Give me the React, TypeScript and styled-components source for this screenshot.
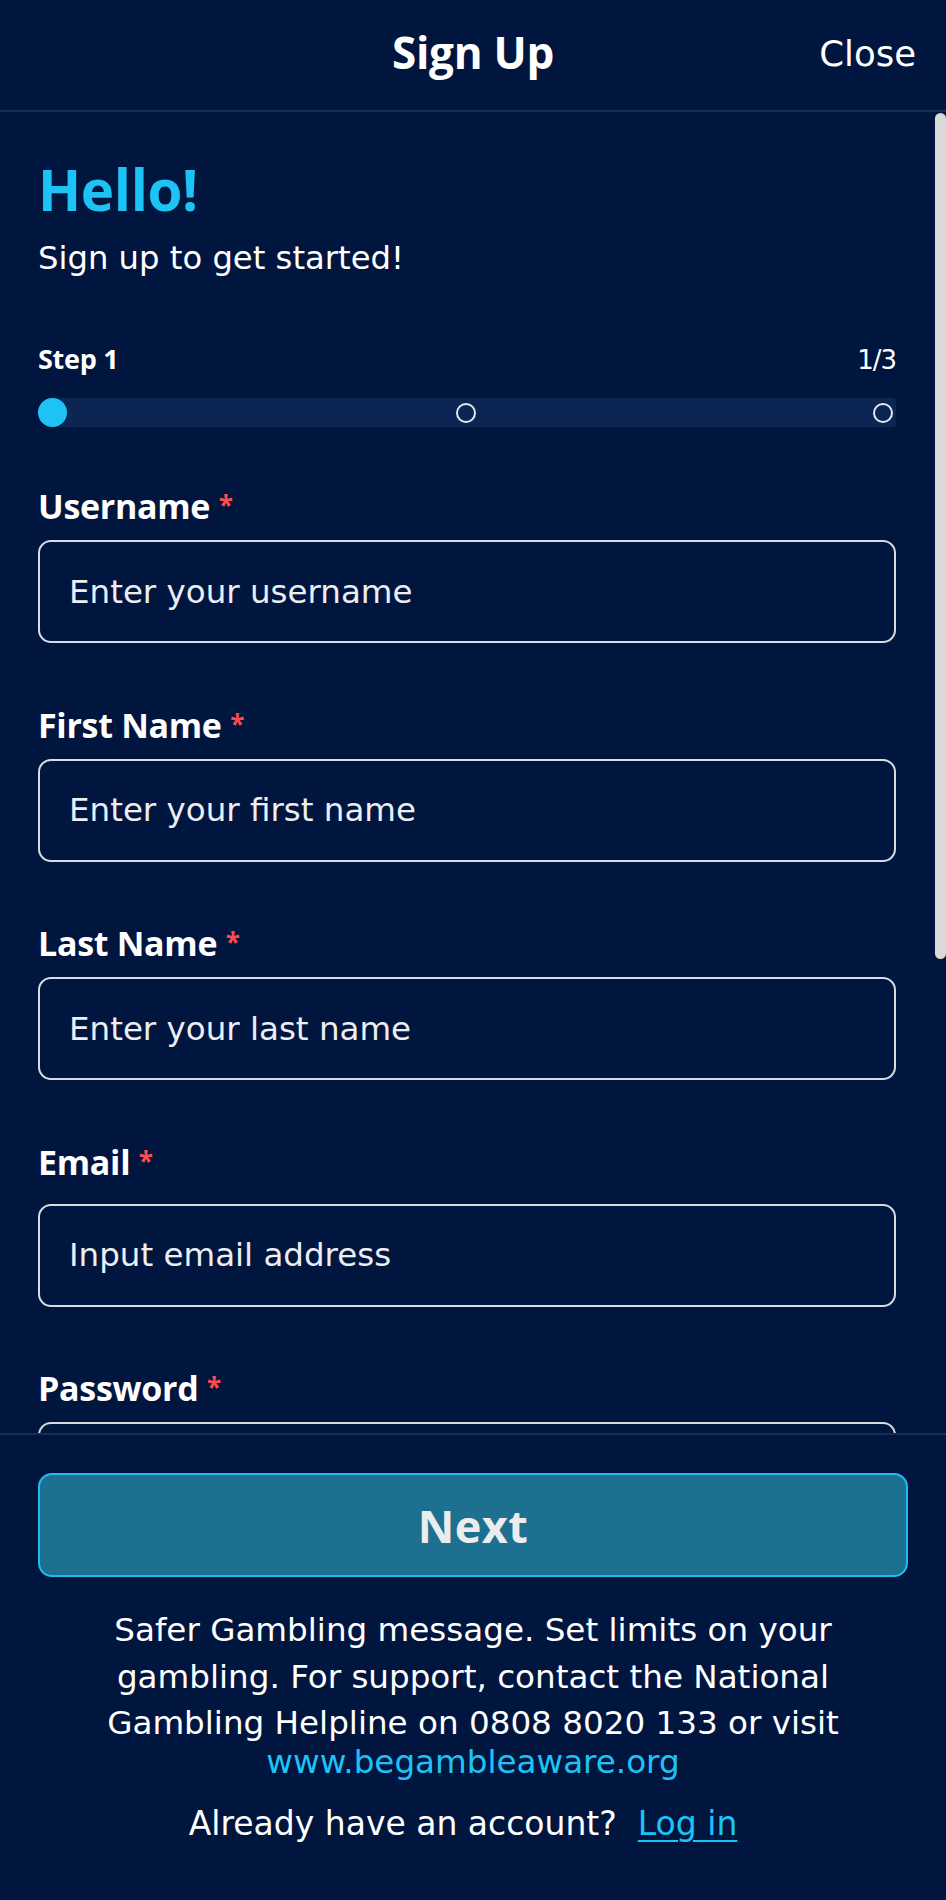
import React from "react";
import styled, { createGlobalStyle } from "styled-components";

const GlobalStyle = createGlobalStyle`
  html, body {
    margin: 0;
    padding: 0;
    background: #01163f;
  }
  * {
    box-sizing: border-box;
  }
`;

const fields = [
  { label: "Username", placeholder: "Enter your username" },
  { label: "First Name", placeholder: "Enter your first name" },
  { label: "Last Name", placeholder: "Enter your last name" },
  { label: "Email", placeholder: "Input email address", spaced: true },
  { label: "Password", placeholder: "" },
];

const App: React.FC = () => {
  return (
    <>
      <GlobalStyle />
      <Page>
        <Header>
          <HeaderSide />
          <Title>Sign Up</Title>
          <HeaderSide>
            <CloseButton>Close</CloseButton>
          </HeaderSide>
        </Header>

        <ScrollArea>
          <Content>
            <Hello>Hello!</Hello>
            <Subtitle>Sign up to get started!</Subtitle>

            <StepRow>
              <StepLabel>Step 1</StepLabel>
              <StepCount>1/3</StepCount>
            </StepRow>
            <Progress>
              <ActiveDot />
              <Dot />
              <Dot $end />
            </Progress>

            {fields.map((field) => (
              <Field key={field.label}>
                <Label $spaced={field.spaced}>
                  {field.label} <Required>*</Required>
                </Label>
                <Input type="text" placeholder={field.placeholder} />
              </Field>
            ))}
          </Content>
          <ScrollTrack>
            <ScrollThumb />
          </ScrollTrack>
        </ScrollArea>

        <Footer>
          <NextButton>Next</NextButton>
          <SaferText>
            Safer Gambling message. Set limits on your
            <br />
            gambling. For support, contact the National
            <br />
            Gambling Helpline on 0808 8020 133 or visit
          </SaferText>
          <SaferLink href="#">www.begambleaware.org</SaferLink>
          <LoginRow>
            Already have an account?&nbsp;&nbsp;<LoginLink href="#">Log in</LoginLink>
          </LoginRow>
        </Footer>
      </Page>
    </>
  );
};

const Page = styled.div`
  width: 946px;
  height: 1900px;
  background: #01163f;
  color: #ffffff;
  display: flex;
  flex-direction: column;
  overflow: hidden;
`;

const Header = styled.header`
  height: 112px;
  flex-shrink: 0;
  display: grid;
  grid-template-columns: 1fr auto 1fr;
  align-items: center;
  padding: 0 30px 6px 30px;
  border-bottom: 2px solid #172b55;
`;

const HeaderSide = styled.div`
  display: flex;
  justify-content: flex-end;
`;

const Title = styled.h1`
  margin: 0;
  font-family: "Open Sans", sans-serif;
  font-weight: 700;
  font-size: 44px;
  line-height: 1.2;
  letter-spacing: -0.3px;
`;

const CloseButton = styled.button`
  background: none;
  border: none;
  padding: 0;
  margin-top: 5px;
  color: #ffffff;
  font-family: "DejaVu Sans", sans-serif;
  font-size: 35.5px;
  line-height: 1.2;
  cursor: pointer;
`;

const ScrollArea = styled.div`
  height: 1321px;
  flex-shrink: 0;
  display: flex;
  overflow: hidden;
`;

const Content = styled.div`
  flex: 1;
  padding: 45px 37px 0 38px;
  display: flex;
  flex-direction: column;
`;

const ScrollTrack = styled.div`
  width: 13px;
  flex-shrink: 0;
  padding: 1px 0 0 2px;
`;

const ScrollThumb = styled.div`
  width: 11px;
  height: 846px;
  border-radius: 6px;
  background: #d9d9d9;
`;

const Hello = styled.h2`
  margin: 0;
  font-family: "Open Sans", sans-serif;
  font-weight: 700;
  font-size: 56.5px;
  line-height: 66px;
  color: #1ec3f5;
  letter-spacing: -0.4px;
`;

const Subtitle = styled.p`
  margin: 12px 0 0 0;
  font-family: "DejaVu Sans", sans-serif;
  font-size: 32.25px;
  line-height: 46px;
`;

const StepRow = styled.div`
  margin-top: 58px;
  display: flex;
  justify-content: space-between;
  align-items: baseline;
  line-height: 40px;
`;

const StepLabel = styled.span`
  font-family: "Open Sans", sans-serif;
  font-weight: 700;
  font-size: 27px;
  letter-spacing: -0.3px;
`;

const StepCount = styled.span`
  font-family: "DejaVu Sans", sans-serif;
  font-size: 26px;
  letter-spacing: -1px;
`;

const Progress = styled.div`
  margin-top: 18px;
  height: 29px;
  padding-right: 3px;
  background: #0d2552;
  border-radius: 15px 4px 4px 15px;
  display: grid;
  grid-template-columns: 1fr auto 1fr;
  align-items: center;
`;

const ActiveDot = styled.span`
  width: 29px;
  height: 29px;
  border-radius: 50%;
  background: #1ec3f5;
`;

const Dot = styled.span<{ $end?: boolean }>`
  width: 20px;
  height: 20px;
  border-radius: 50%;
  border: 2.5px solid #e6e9f0;
  justify-self: ${({ $end }) => ($end ? "end" : "center")};
`;

const Field = styled.div`
  margin-top: 55px;
  display: flex;
  flex-direction: column;

  & + & {
    margin-top: 57.5px;
  }
`;

const Label = styled.label<{ $spaced?: boolean }>`
  font-family: "Open Sans", sans-serif;
  font-weight: 700;
  font-size: 34px;
  line-height: 46px;
  letter-spacing: -0.3px;
  margin-bottom: ${({ $spaced }) => ($spaced ? "19px" : "11px")};
`;

const Required = styled.span`
  color: #ff4a4f;
  font-size: 26px;
  vertical-align: 4px;
`;

const Input = styled.input`
  height: 103px;
  width: 100%;
  padding: 0 29px;
  border: 2px solid #d8dbe2;
  border-radius: 13px;
  background: transparent;
  color: #ffffff;
  font-family: "DejaVu Sans", sans-serif;
  font-size: 32.5px;
  outline: none;

  &::placeholder {
    color: #eceef2;
    opacity: 1;
  }
`;

const Footer = styled.footer`
  flex: 1;
  border-top: 2px solid #172b55;
  padding: 38px 38px 0 38px;
  display: flex;
  flex-direction: column;
  align-items: center;
  font-family: "DejaVu Sans", sans-serif;
`;

const NextButton = styled.button`
  width: 100%;
  height: 104px;
  flex-shrink: 0;
  border: 2.5px solid #1ebdf1;
  border-radius: 14px;
  background: #1d7090;
  color: #ececec;
  font-family: "Open Sans", sans-serif;
  font-weight: 700;
  font-size: 45px;
  letter-spacing: 0.5px;
  cursor: pointer;
`;

const SaferText = styled.p`
  margin: 30px 0 0 0;
  font-size: 32.6px;
  line-height: 46.5px;
  text-align: center;
  white-space: nowrap;
`;

const SaferLink = styled.a`
  display: block;
  font-size: 32.6px;
  line-height: 31px;
  color: #1ec3f5;
  text-decoration: none;
`;

const LoginRow = styled.p`
  margin: 23px 0 0 0;
  padding-right: 20px;
  font-size: 33px;
  line-height: 46px;
  text-align: center;
`;

const LoginLink = styled.a`
  color: #1ec3f5;
  text-decoration: underline;
  text-underline-offset: 5px;
  text-decoration-thickness: 2px;
`;

export default App;
